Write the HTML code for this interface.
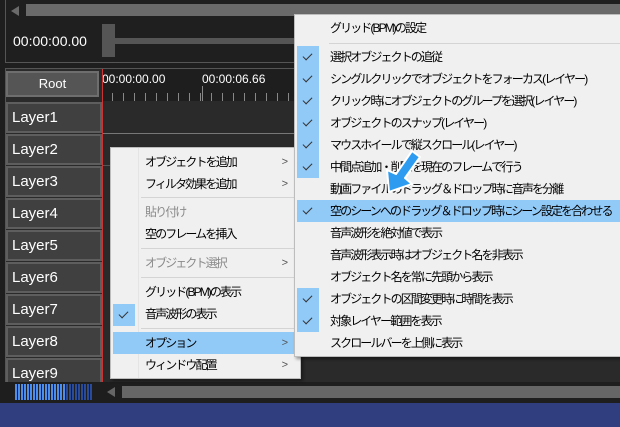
<!DOCTYPE html>
<html><head><meta charset="utf-8"><style>
*{margin:0;padding:0;box-sizing:border-box}
body{width:620px;height:427px;background:#1e1e1e;position:relative;overflow:hidden;font-family:"Liberation Sans","Noto Sans CJK JP",sans-serif;}
.a{position:absolute}
.lay{position:absolute;left:6px;width:96px;height:31px;background:#404040;border:2px solid #5e5e5e;color:#fff;font-size:15px;line-height:27px;padding-left:4px}
.m{position:absolute;background:#f0f0f0;border:1px solid #bdbdbd;box-shadow:2px 2px 3px rgba(0,0,0,.4);font-size:12px;color:#000}
.it{position:absolute;left:0;right:0;height:22px;line-height:22px;letter-spacing:-1.9px;white-space:nowrap}
.sep{position:absolute;height:1px;background:#d4d4d4;right:2px}
.ck{position:absolute;width:22px;height:22px;background:#91c9f7}
.ck::after{content:"";position:absolute;left:8px;top:5px;width:4px;height:8px;border:solid #333;border-width:0 1.5px 1.5px 0;transform:rotate(45deg)}
.ar{position:absolute;right:12px;color:#555;font-size:11px;letter-spacing:0}
.g{color:#8a8a8a}
</style></head><body>
<div class="a" style="left:5px;top:0;width:620px;height:63px;border:1px solid #555;border-top:none;background:#1f1f1f"></div>
<div class="a" style="left:11px;top:6px;width:0;height:0;border-top:5px solid transparent;border-bottom:5px solid transparent;border-right:8px solid #6a6a6a"></div>
<div class="a" style="left:26px;top:4px;width:600px;height:12px;background:#6a6a6a"></div>
<div class="a" style="left:13px;top:33px;color:#fff;font-size:14px">00:00:00.00</div>
<div class="a" style="left:102px;top:24px;width:13px;height:33px;background:#555"></div>
<div class="a" style="left:115px;top:38px;width:200px;height:6px;background:#555"></div>
<div class="a" style="left:5px;top:68px;width:620px;height:320px;border:1px solid #555;background:#2a2a2a"></div>
<div class="a" style="left:6px;top:71px;width:93px;height:26px;background:#555;border:2px solid #6e6e6e;color:#fff;font-size:13px;text-align:center;line-height:22px">Root</div>
<div class="a" style="left:102px;top:69px;width:520px;height:32px;background:#1e1e1e"></div>
<div class="a" style="left:102px;top:72px;color:#fff;font-size:12px">00:00:00.00</div>
<div class="a" style="left:202px;top:72px;color:#fff;font-size:12px">00:00:06.66</div>
<div class="a" style="left:102px;top:93px;width:200px;height:8px;background:repeating-linear-gradient(90deg,transparent 0 10px,#888 10px 11px)"></div>
<div class="a" style="left:202px;top:86px;width:1px;height:15px;background:#888"></div>
<div class="a" style="left:102px;top:69px;width:1px;height:320px;background:#c33"></div>
<div class="lay" style="top:102px">Layer1</div>
<div class="lay" style="top:134px">Layer2</div>
<div class="lay" style="top:166px">Layer3</div>
<div class="lay" style="top:198px">Layer4</div>
<div class="lay" style="top:230px">Layer5</div>
<div class="lay" style="top:262px">Layer6</div>
<div class="lay" style="top:294px">Layer7</div>
<div class="lay" style="top:326px">Layer8</div>
<div class="lay" style="top:358px;height:26px">Layer9</div>
<div class="a" style="left:103px;top:133px;width:520px;height:1px;background:#777"></div>
<div class="a" style="left:103px;top:165px;width:520px;height:1px;background:#555"></div>
<div class="a" style="left:5px;top:382px;width:620px;height:20px;background:#1e1e1e"></div>
<div class="a" style="left:15px;top:384px;width:77px;height:16px;background:repeating-linear-gradient(90deg,#4a8ef0 0 2px,transparent 2px 3px)"></div>
<div class="a" style="left:66px;top:384px;width:26px;height:16px;background:repeating-linear-gradient(90deg,#2a4a9a 0 2px,#1e1e1e 2px 3px)"></div>
<div class="a" style="left:107px;top:387px;width:0;height:0;border-top:5px solid transparent;border-bottom:5px solid transparent;border-right:8px solid #666"></div>
<div class="a" style="left:122px;top:386px;width:500px;height:12px;background:#666"></div>
<div class="a" style="left:0;top:403px;width:620px;height:24px;background:#303d7e"></div>
<!-- menu 1 -->
<div class="m" style="left:110px;top:147px;width:191px;height:232px">
<div class="a" style="left:27px;top:0;bottom:0;width:1px;background:#e4e4e4"></div>
<div class="it" style="top:3px;padding-left:34px">オブジェクトを追加<span class="ar">&gt;</span></div>
<div class="it" style="top:25px;padding-left:34px">フィルタ効果を追加<span class="ar">&gt;</span></div>
<div class="sep" style="top:49px;left:30px"></div>
<div class="it g" style="top:53px;padding-left:34px">貼り付け</div>
<div class="it" style="top:75px;padding-left:34px">空のフレームを挿入</div>
<div class="sep" style="top:100px;left:30px"></div>
<div class="it g" style="top:104px;padding-left:34px">オブジェクト選択<span class="ar">&gt;</span></div>
<div class="sep" style="top:129px;left:30px"></div>
<div class="it" style="top:133px;padding-left:34px">グリッド(BPM)の表示</div>
<div class="ck" style="left:2px;top:156px"></div>
<div class="it" style="top:155px;padding-left:34px">音声波形の表示</div>
<div class="sep" style="top:180px;left:30px"></div>
<div class="it" style="top:184px;left:2px;right:6px;background:#91c9f7;padding-left:32px">オプション<span class="ar" style="right:6px">&gt;</span></div>
<div class="it" style="top:206px;padding-left:34px">ウィンドウ配置<span class="ar">&gt;</span></div>
</div>
<!-- menu 2 -->
<div class="m" style="left:294px;top:14px;width:330px;height:343px">
<div class="it" style="top:2px;padding-left:35px">グリッド(BPM)の設定</div>
<div class="sep" style="top:28px;left:34px"></div>
<div class="ck" style="left:2px;top:31px"></div>
<div class="ck" style="left:2px;top:53px"></div>
<div class="ck" style="left:2px;top:75px"></div>
<div class="ck" style="left:2px;top:97px"></div>
<div class="ck" style="left:2px;top:119px"></div>
<div class="ck" style="left:2px;top:141px"></div>
<div class="it" style="top:31px;padding-left:35px">選択オブジェクトの追従</div>
<div class="it" style="top:53px;padding-left:35px">シングルクリックでオブジェクトをフォーカス(レイヤー)</div>
<div class="it" style="top:75px;padding-left:35px">クリック時にオブジェクトのグループを選択(レイヤー)</div>
<div class="it" style="top:97px;padding-left:35px">オブジェクトのスナップ(レイヤー)</div>
<div class="it" style="top:119px;padding-left:35px">マウスホイールで縦スクロール(レイヤー)</div>
<div class="it" style="top:141px;padding-left:35px">中間点追加・削除を現在のフレームで行う</div>
<div class="it" style="top:163px;padding-left:35px">動画ファイルのドラッグ＆ドロップ時に音声を分離</div>
<div class="it" style="top:185px;left:2px;background:#91c9f7;padding-left:33px">空のシーンへのドラッグ＆ドロップ時にシーン設定を合わせる</div>
<div class="ck" style="left:2px;top:185px;background:transparent"></div>
<div class="it" style="top:207px;padding-left:35px">音声波形を絶対値で表示</div>
<div class="it" style="top:229px;padding-left:35px">音声波形表示時はオブジェクト名を非表示</div>
<div class="it" style="top:251px;padding-left:35px">オブジェクト名を常に先頭から表示</div>
<div class="ck" style="left:2px;top:273px"></div>
<div class="ck" style="left:2px;top:295px"></div>
<div class="it" style="top:273px;padding-left:35px">オブジェクトの区間変更時に時間を表示</div>
<div class="it" style="top:295px;padding-left:35px">対象レイヤー範囲を表示</div>
<div class="it" style="top:317px;padding-left:35px">スクロールバーを上側に表示</div>
</div>
<svg class="a" style="left:0;top:0" width="620" height="427">
<polygon points="412,151 420,157 405,178 412,184 389,192 387,170 396,174" fill="#2d9cf0" stroke="#fff" stroke-width="2" stroke-linejoin="round"/>
</svg>
</body></html>
